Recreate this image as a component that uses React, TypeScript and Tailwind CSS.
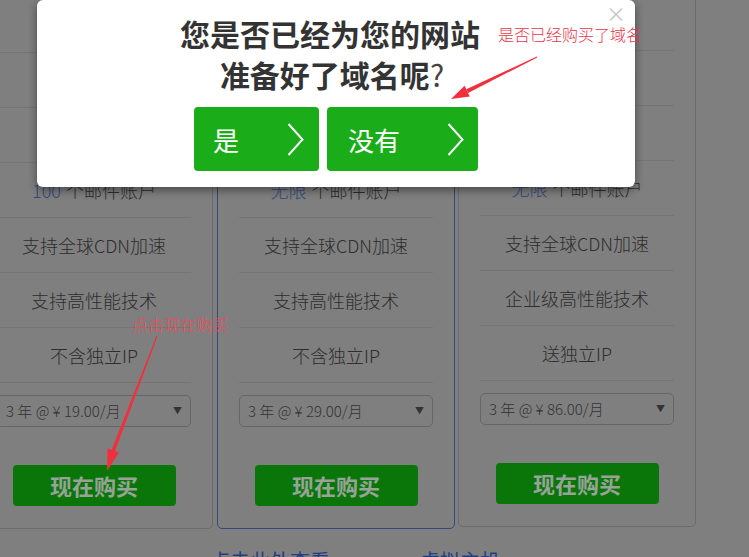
const cards = [
  {
    top: "mt-[2px]",
    border: "border-[#6c6c6c]",
    rows: ["1 个网站", "2GB 网页空间", "100GB 月流量"],
    mail: "100",
    feats: ["支持全球CDN加速", "支持高性能技术", "不含独立IP"],
    price: "3 年 @ ¥ 19.00/月",
  },
  {
    top: "mt-[2px]",
    border: "border-[#34497d]",
    rows: ["5 个网站", "10GB 网页空间", "不限流量"],
    mail: "无限",
    feats: ["支持全球CDN加速", "支持高性能技术", "不含独立IP"],
    price: "3 年 @ ¥ 29.00/月",
  },
  {
    top: "mt-0",
    border: "border-[#6c6c6c]",
    rows: ["无限 网站", "50GB 网页空间", "不限流量"],
    mail: "无限",
    feats: ["支持全球CDN加速", "企业级高性能技术", "送独立IP"],
    price: "3 年 @ ¥ 86.00/月",
  },
];

function Chevron() {
  return (
    <svg width="17" height="33" viewBox="0 0 17 33" fill="none">
      <polyline points="1.5,1 15.5,16.5 1.5,32" stroke="white" strokeWidth="2" />
    </svg>
  );
}

function Row({ children }: { children: React.ReactNode }) {
  return (
    <div className="h-[55px] border-b border-[#757575] flex items-center justify-center text-[18px] font-light text-[#2d2d2d] whitespace-nowrap">
      {children}
    </div>
  );
}

export default function App() {
  return (
    <div className="relative h-[557px] w-[749px] overflow-hidden bg-[#7f7f7f] font-['Noto_Sans_CJK_SC',sans-serif]">
      {/* dimmed page */}
      <div className="flex items-start gap-[3px] ml-[-25px] mt-[-5px]">
        {cards.map((c, i) => (
          <div
            key={i}
            className={`${c.top} ${c.border} w-[238px] shrink-0 border rounded-[5px] px-[21px] pb-[22px] ${i === 0 ? "mr-px" : ""}`}
          >
            {c.rows.map((r) => (
              <Row key={r}>{r}</Row>
            ))}
            <Row>
              <span className="text-[#2f4b7c]">{c.mail}</span>
              <span className="ml-[5px]">个邮件账户</span>
            </Row>
            {c.feats.map((f) => (
              <Row key={f}>{f}</Row>
            ))}
            <div className="mt-[12px] h-[32px] border border-[#666] rounded-[5px] px-[8px] flex items-center justify-between text-[15px] font-light text-[#333]">
              <span>{c.price}</span>
              <span className="text-[9px] text-[#333]">▼</span>
            </div>
            <div className="mt-[38px] mx-auto w-[163px] h-[41px] rounded-[4px] bg-[#0a760a] flex items-center justify-center text-[22px] font-bold text-[#98a398]">
              现在购买
            </div>
          </div>
        ))}
      </div>

      <div className="flex pl-[210px] gap-[90px] mt-[20px] text-[20px] leading-[24px] text-[#1f3f80]">
        <span>点击此处查看</span>
        <span>虚拟主机</span>
      </div>

      {/* modal */}
      <div className="absolute left-[37px] top-0 w-[598px] h-[187px] rounded-[6px] bg-white shadow-[0_3px_10px_rgba(0,0,0,0.45)] pt-[13px]">
        <span className="absolute right-[9px] top-[3px] text-[20px] leading-[22px] text-[#c8c8c8]">×</span>
        <div className="text-center text-[30px] leading-[41px] font-bold text-[#333] pr-[8px]">
          <div className="pr-[4px]">您是否已经为您的网站</div>
          <div>
            准备好了域名呢<span className="font-normal text-[#444]">?</span>
          </div>
        </div>
        <div className="mt-[12px] flex justify-center gap-[8px]">
          <div className="w-[125px] h-[64px] rounded-[4px] bg-[#1aad19] flex items-center justify-between pl-[19px] pr-[15px] text-[26px] text-white">
            <span>是</span>
            <Chevron />
          </div>
          <div className="w-[151px] h-[64px] rounded-[4px] bg-[#1aad19] flex items-center justify-between pl-[21px] pr-[14px] text-[26px] text-white">
            <span>没有</span>
            <Chevron />
          </div>
        </div>
      </div>

      {/* annotations */}
      <span className="absolute left-[498px] top-[24px] text-[16px] leading-[20px] font-light text-[#e6354a] whitespace-nowrap">
        是否已经购买了域名
      </span>
      <span className="absolute left-[132px] top-[314px] text-[16px] leading-[20px] font-light text-[#ef4a5a] whitespace-nowrap">
        点击现在购买
      </span>
      <svg className="absolute inset-0 pointer-events-none" width="749" height="557">
        <polygon points="536.8,56.6 537.2,57.4 468.1,92.9 466.3,89.3" fill="#f0303c" />
        <polygon points="451,99 469.8,96.5 464.6,85.7" fill="#f0303c" />
        <polygon points="156.5,335.8 157.5,336.2 114.7,451.9 111.3,450.7" fill="#f0303c" />
        <polygon points="107,471 118.9,452.4 107.6,448.2" fill="#f0303c" />
      </svg>
    </div>
  );
}
